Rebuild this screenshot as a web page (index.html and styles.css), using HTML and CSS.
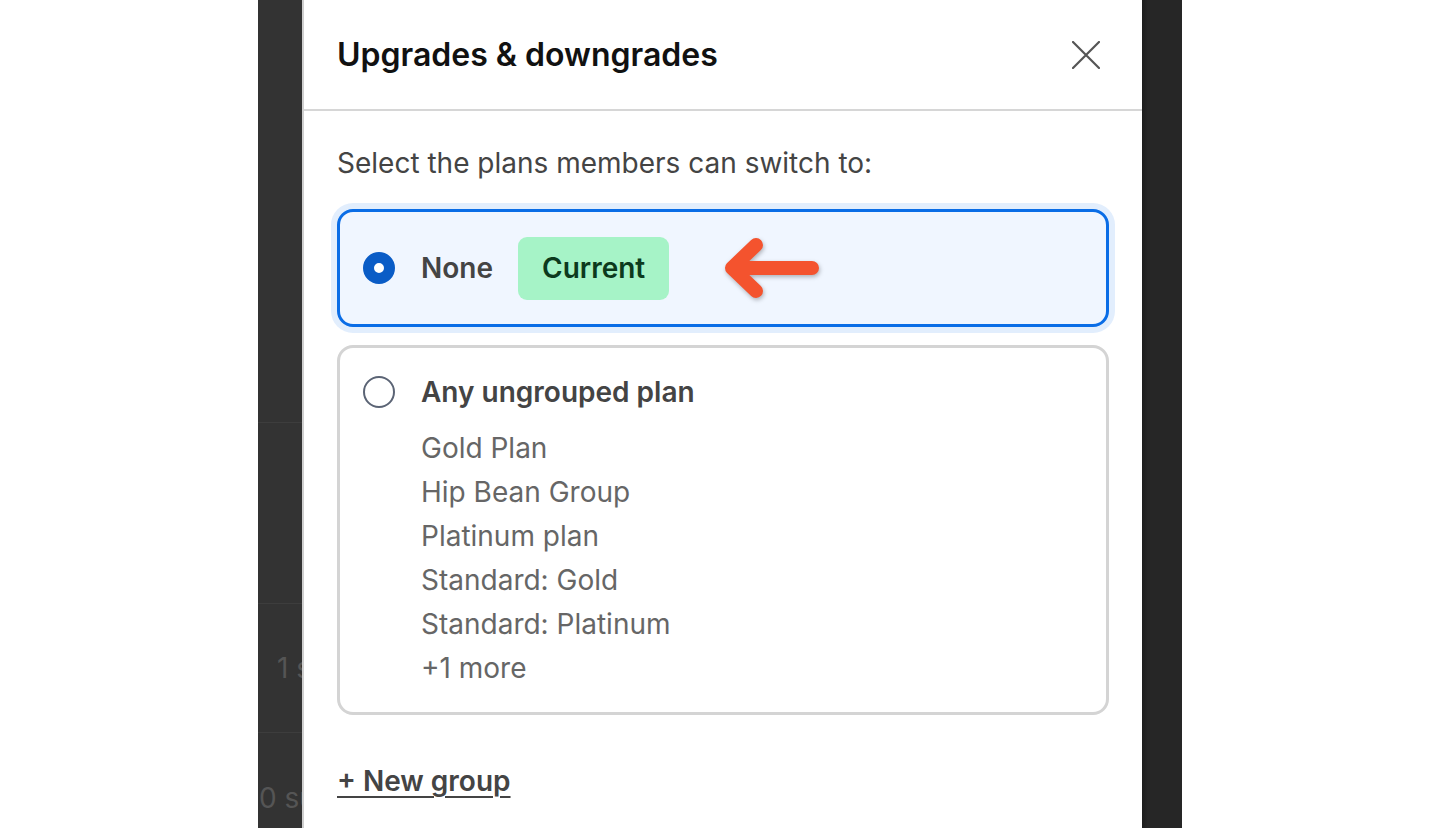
FILE: index.html
```html
<!DOCTYPE html>
<html lang="en">
<head>
<meta charset="utf-8">
<title>Upgrades &amp; downgrades</title>
<link rel="stylesheet" href="styles.css">
</head>
<body>
<div class="stage">
  <div class="backdrop">
    <div class="bd-row bd-row-1"></div>
    <div class="bd-row bd-row-2"></div>
    <div class="bd-row bd-row-3"><span class="bd-text bd-text-1">1 subscriber</span></div>
    <div class="bd-row bd-row-4"><span class="bd-text bd-text-2">0 subscribers</span></div>
  </div>
  <div class="modal">
    <div class="modal-header">
      <h1 class="modal-title">Upgrades &amp; downgrades</h1>
      <button class="close-btn" aria-label="Close">
        <svg width="28" height="28" viewBox="0 0 28 28" fill="none" stroke="#555" stroke-width="2.2" stroke-linecap="round"><path d="M1 1 L27 27 M27 1 L1 27"/></svg>
      </button>
    </div>
    <div class="modal-body">
      <p class="lead">Select the plans members can switch to:</p>
      <div class="option option-selected">
        <span class="radio radio-on"></span>
        <span class="option-label">None</span>
        <span class="badge">Current</span>
        <svg class="arrow" width="100" height="64" viewBox="0 0 100 64" fill="none" stroke="#f4532e" stroke-width="14" stroke-linecap="round" stroke-linejoin="round"><path d="M34 9 L10 32 L34 55 M10 32 H90"/></svg>
      </div>
      <div class="option">
        <div class="option-head">
          <span class="radio"></span>
          <span class="option-label">Any ungrouped plan</span>
        </div>
        <ul class="plan-list">
          <li>Gold Plan</li>
          <li>Hip Bean Group</li>
          <li>Platinum plan</li>
          <li>Standard: Gold</li>
          <li>Standard: Platinum</li>
          <li>+1 more</li>
        </ul>
      </div>
      <a class="new-group" href="#">+ New group</a>
    </div>
  </div>
  <div class="shade"></div>
</div>
</body>
</html>
```
FILE: styles.css
```css
* { box-sizing: border-box; }
html, body { margin: 0; padding: 0; background: #fff; }
body {
  font-family: Inter, "Noto Sans", "Liberation Sans", sans-serif;
  height: 828px;
  overflow: hidden;
}
.stage {
  display: flex;
  width: 924px;
  height: 828px;
  margin: 0 auto;
}
.backdrop {
  width: 44px;
  flex: none;
  background: #333;
  overflow: hidden;
  display: flex;
  flex-direction: column;
}
.bd-row { border-bottom: 1px solid #3d3d3d; flex: none; display: flex; align-items: center; white-space: nowrap; }
.bd-row-1 { height: 423px; }
.bd-row-2 { height: 181px; }
.bd-row-3 { height: 129px; }
.bd-row-4 { height: 130px; border-bottom: none; }
.bd-text { font-size: 28px; color: #555; }
.bd-text-1 { padding-left: 19px; }
.bd-text-2 { padding-left: 1px; }

.modal {
  width: 840px;
  flex: none;
  background: #fff;
  border-left: 2px solid #cfcfcf;
  display: flex;
  flex-direction: column;
}
.modal-header {
  height: 111px;
  border-bottom: 2px solid #d6d6d6;
  display: flex;
  align-items: center;
  justify-content: space-between;
  padding: 0 42px 0 33px;
}
.modal-title {
  margin: 0;
  font-size: 32px;
  font-weight: 600;
  color: #111;
}
.close-btn {
  border: none;
  background: none;
  padding: 0;
  width: 28px;
  height: 28px;
  display: flex;
}
.modal-body {
  padding: 34px 33px 0 33px;
  display: flex;
  flex-direction: column;
}
.lead {
  margin: 0 0 28px 0;
  font-size: 28px;
  line-height: 36px;
  color: #444;
}
.option {
  border: 3px solid #d4d4d4;
  border-radius: 16px;
  padding: 24px 23px 22px 23px;
  margin-bottom: 18px;
}
.option-selected {
  border-color: #0a6de6;
  background: #f0f6ff;
  box-shadow: 0 0 0 6px #e2eefd;
  display: flex;
  align-items: center;
  height: 118px;
  padding: 0 23px;
}
.option-head { display: flex; align-items: center; height: 40px; }
.radio {
  width: 32px;
  height: 32px;
  border-radius: 50%;
  border: 2px solid #5b6475;
  flex: none;
  margin-right: 26px;
  background: #fff;
}
.radio-on {
  border: 11px solid #0a5cc6;
  background: #fff;
}
.option-label {
  font-size: 28px;
  line-height: 36px;
  font-weight: 600;
  color: #444;
}
.badge {
  margin-left: 25px;
  background: #a6f3c7;
  color: #0c3a1d;
  font-size: 28px;
  font-weight: 600;
  line-height: 29px;
  padding: 17px 24px;
  border-radius: 9px;
}
.arrow {
  flex: none;
  margin-left: 53px;
  filter: drop-shadow(1px 2px 2px rgba(0,0,0,0.28));
}
.plan-list {
  list-style: none;
  margin: 14px 0 0 0;
  padding: 0 0 0 58px;
}
.plan-list li {
  font-size: 28px;
  line-height: 44px;
  color: #666;
}
.new-group {
  margin-top: 30px;
  align-self: flex-start;
  font-size: 28px;
  line-height: 36px;
  font-weight: 600;
  color: #444;
  text-decoration: underline;
  text-underline-offset: 5px;
  text-decoration-thickness: 2px;
}
.shade {
  width: 40px;
  flex: none;
  background: linear-gradient(90deg, #1d1d1d 0, #262626 6px, #262626 100%);
}
```
